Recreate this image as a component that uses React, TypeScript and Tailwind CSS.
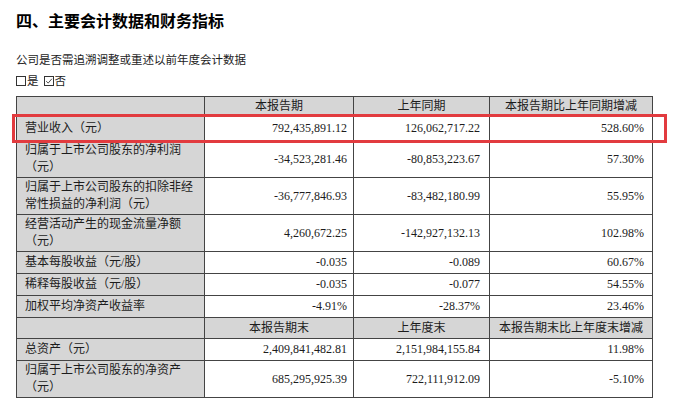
import React from "react";

type Row = {
  label: string[];
  values: string[];
  h: string;
  header?: boolean;
};

const rows: Row[] = [
  { label: [""], values: ["本报告期", "上年同期", "本报告期比上年同期增减"], h: "h-[19px]", header: true },
  { label: ["营业收入（元）"], values: ["792,435,891.12", "126,062,717.22", "528.60%"], h: "h-[25px]" },
  { label: ["归属于上市公司股东的净利润", "（元）"], values: ["-34,523,281.46", "-80,853,223.67", "57.30%"], h: "h-[37px]" },
  { label: ["归属于上市公司股东的扣除非经", "常性损益的净利润（元）"], values: ["-36,777,846.93", "-83,482,180.99", "55.95%"], h: "h-[37px]" },
  { label: ["经营活动产生的现金流量净额", "（元）"], values: ["4,260,672.25", "-142,927,132.13", "102.98%"], h: "h-[37px]" },
  { label: ["基本每股收益（元/股）"], values: ["-0.035", "-0.089", "60.67%"], h: "h-[22px]" },
  { label: ["稀释每股收益（元/股）"], values: ["-0.035", "-0.077", "54.55%"], h: "h-[22px]" },
  { label: ["加权平均净资产收益率"], values: ["-4.91%", "-28.37%", "23.46%"], h: "h-[22px]" },
  { label: [""], values: ["本报告期末", "上年度末", "本报告期末比上年度末增减"], h: "h-[21px]", header: true },
  { label: ["总资产（元）"], values: ["2,409,841,482.81", "2,151,984,155.84", "11.98%"], h: "h-[22px]" },
  { label: ["归属于上市公司股东的净资产", "（元）"], values: ["685,295,925.39", "722,111,912.09", "-5.10%"], h: "h-[37px]" },
];

const pads = ["pr-[6px]", "pr-[9px]", "pr-[8px]"];

export default function App() {
  return (
    <div
      className="relative h-[406px] w-[687px] overflow-hidden bg-white pl-4 text-[#1c1c1c]"
      style={{ fontFamily: '"Liberation Serif", "Noto Sans CJK SC", serif' }}
    >
      <h1
        className="pt-2 text-[16px] font-bold leading-6 text-black"
        style={{ fontFamily: '"Noto Sans CJK SC", sans-serif' }}
      >
        四、主要会计数据和财务指标
      </h1>
      <p className="mt-[19px] text-[11.5px] leading-[18px]">
        公司是否需追溯调整或重述以前年度会计数据
      </p>
      <p className="mt-[3px] flex items-center text-[11.5px] leading-[18px]">
        <span className="mr-[1px] inline-block h-[10px] w-[10px] border border-[#333]" />
        <span>是</span>
        <span className="ml-[5px] mr-[1px] inline-flex h-[10px] w-[10px] items-center justify-center border border-[#333]">
          <svg viewBox="0 0 10 10" className="h-[8px] w-[8px]">
            <path d="M1.5 5.2 L4 7.6 L8.6 2.2" fill="none" stroke="#333" strokeWidth="1.1" />
          </svg>
        </span>
        <span>否</span>
      </p>

      <table className="mt-[6px] w-[636px] table-fixed border-collapse border border-[#444] text-[12px] leading-[17px]">
        <colgroup>
          <col className="w-[188px]" />
          <col className="w-[149px]" />
          <col className="w-[136px]" />
          <col className="w-[163px]" />
        </colgroup>
        <tbody>
          {rows.map((r, i) => (
            <tr key={i} className={r.h}>
              <td className="border border-[#444] bg-[#d6d6d6] p-0 pl-2 align-middle">
                {r.label.map((l, j) => (
                  <div key={j}>{l}</div>
                ))}
              </td>
              {r.values.map((v, j) =>
                r.header ? (
                  <td key={j} className="border border-[#444] bg-[#d6d6d6] p-0 text-center align-middle">
                    {v}
                  </td>
                ) : (
                  <td key={j} className={`border border-[#444] bg-white p-0 text-right align-middle ${pads[j]}`}>
                    {v}
                  </td>
                )
              )}
            </tr>
          ))}
        </tbody>
      </table>

      {/* highlight box */}
      <div className="absolute left-[12px] top-[114px] h-[29px] w-[655px] border-[3px] border-[#e23b3f]" />
    </div>
  );
}
